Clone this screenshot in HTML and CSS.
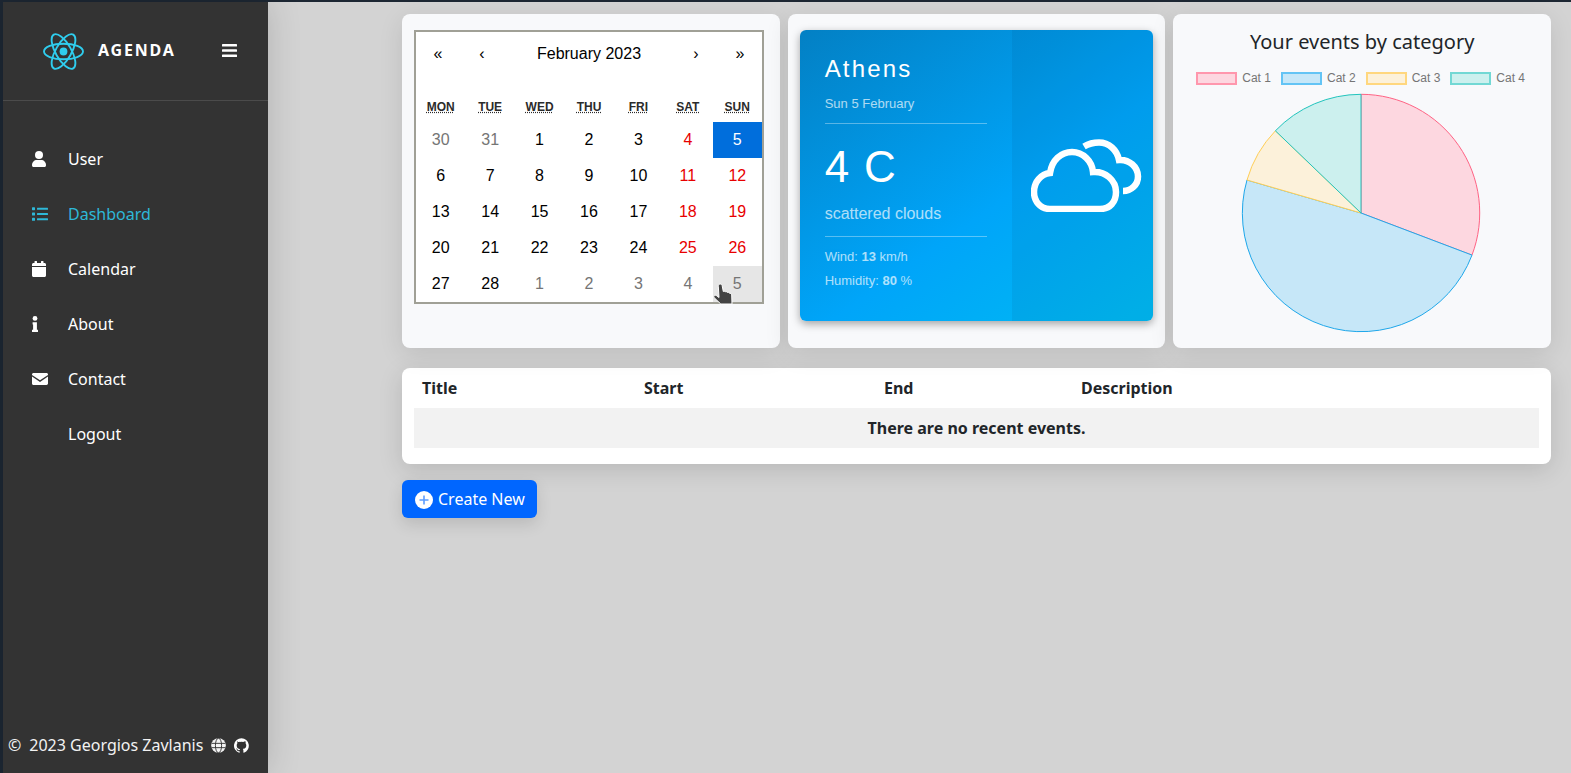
FILE: index.html
```html
<!DOCTYPE html>
<html>
<head>
    <meta charset="utf-8" />
    <title>Agenda</title>
    <link rel="stylesheet" href="styles.css">
</head>
<body>
<div class="page">
    <aside class="sidebar">
        <div class="brand">
            <svg class="brand_logo" viewBox="-20.500 -18.500 41 37" fill="none" stroke="#2fcdee" stroke-width="1.900">
                <circle r="3.900" fill="#2fcdee" stroke="none"/>
                <ellipse rx="19.500" ry="7.800"/>
                <ellipse rx="19.500" ry="7.800" transform="rotate(60)"/>
                <ellipse rx="19.500" ry="7.800" transform="rotate(120)"/>
            </svg>
            <span class="brand_name">AGENDA</span>
            <svg class="brand_toggle" viewBox="0 0 15 13" fill="#fff">
                <rect y="0" width="15" height="2.600" rx="0.600"/>
                <rect y="5.200" width="15" height="2.600" rx="0.600"/>
                <rect y="10.400" width="15" height="2.600" rx="0.600"/>
            </svg>
        </div>
        <ul class="nav">
            <li class="nav_item">
                <svg class="nav_icon" viewBox="0 0 16 16" fill="currentColor"><circle cx="7" cy="4" r="4"/><path d="M0 14.200C0 11 2.300 9 4.800 9h4.400C11.700 9 14 11 14 14.200 14 15.200 13.300 16 12.400 16H1.600C.7 16 0 15.200 0 14.200z"/></svg>
                User
            </li>
            <li class="nav_item nav_item_active">
                <svg class="nav_icon" viewBox="0 0 16 16" fill="currentColor"><rect x="0" y="1.200" width="3" height="3" rx=".6"/><rect x="0" y="6.500" width="3" height="3" rx=".6"/><rect x="0" y="11.800" width="3" height="3" rx=".6"/><rect x="5" y="1.700" width="11" height="2" rx=".5"/><rect x="5" y="7" width="11" height="2" rx=".5"/><rect x="5" y="12.300" width="11" height="2" rx=".5"/></svg>
                Dashboard
            </li>
            <li class="nav_item">
                <svg class="nav_icon" viewBox="0 0 16 16" fill="currentColor"><path d="M0 6h14v8.500c0 .8-.7 1.500-1.500 1.500h-11C.7 16 0 15.300 0 14.500z"/><path d="M3 0h1.500c.3 0 .5.200.5.500V2h4V.5c0-.3.200-.5.500-.5H11c.3 0 .5.200.5.500V2h1C13.300 2 14 2.700 14 3.500V5H0V3.500C0 2.700.7 2 1.500 2h1V.5C2.500.2 2.700 0 3 0z"/></svg>
                Calendar
            </li>
            <li class="nav_item">
                <svg class="nav_icon" viewBox="0 0 16 16" fill="currentColor"><circle cx="3" cy="2.400" r="2.400"/><path d="M.6 6.200h4.300v7.600h1.100V16H0v-2.200h1.100V8.400H.6z"/></svg>
                About
            </li>
            <li class="nav_item">
                <svg class="nav_icon" viewBox="0 0 16 16" fill="currentColor"><path d="M1.500 2h13c.8 0 1.500.7 1.500 1.500v.4L8 9.300 0 3.900v-.4C0 2.700.7 2 1.500 2z"/><path d="M0 5.600l8 5.300 8-5.300v7C16 13.300 15.300 14 14.500 14h-13C.7 14 0 13.300 0 12.500z"/></svg>
                Contact
            </li>
            <li class="nav_item">
                <span class="nav_icon"></span>
                Logout
            </li>
        </ul>
        <div class="credits">
            <span class="credits_copy">©</span>
            <span>2023 Georgios Zavlanis</span>
            <svg class="credits_icon" viewBox="0 0 16 16">
                <circle cx="8" cy="8" r="7.800" fill="#f4f4f4"/>
                <g fill="none" stroke="#333" stroke-width="1">
                    <ellipse cx="8" cy="8" rx="3.300" ry="7.800"/>
                    <path d="M.5 5.700h15M.5 10.300h15"/>
                </g>
            </svg>
            <svg class="credits_icon" viewBox="0 0 16 16" fill="#fff"><path d="M8 .2a8 8 0 0 0-2.500 15.600c.4.100.5-.2.500-.4v-1.400c-2.200.5-2.700-1-2.700-1-.4-.9-.9-1.200-.9-1.200-.7-.5.100-.5.100-.5.800.1 1.200.8 1.200.8.700 1.200 1.900.9 2.300.7.100-.5.300-.9.500-1.100-1.800-.2-3.600-.9-3.600-4 0-.9.300-1.600.8-2.100-.1-.2-.4-1 .1-2.100 0 0 .7-.2 2.200.8a7.600 7.600 0 0 1 4 0c1.500-1 2.200-.8 2.200-.8.400 1.100.2 1.900.1 2.100.5.600.8 1.300.8 2.100 0 3.100-1.900 3.700-3.700 3.900.3.300.6.700.6 1.500v2.200c0 .2.100.5.600.4A8 8 0 0 0 8 .2z"/></svg>
        </div>
    </aside>

    <main class="content">
        <section class="widgets">
            <div class="card">
                <div class="calendar">
                    <div class="calendar_nav">
                        <span class="calendar_arrow">«</span>
                        <span class="calendar_arrow">‹</span>
                        <span class="calendar_label">February 2023</span>
                        <span class="calendar_arrow">›</span>
                        <span class="calendar_arrow">»</span>
                    </div>
                    <div class="calendar_weekdays">
                        <abbr title="Monday">Mon</abbr>
                        <abbr title="Tuesday">Tue</abbr>
                        <abbr title="Wednesday">Wed</abbr>
                        <abbr title="Thursday">Thu</abbr>
                        <abbr title="Friday">Fri</abbr>
                        <abbr title="Saturday">Sat</abbr>
                        <abbr title="Sunday">Sun</abbr>
                    </div>
                    <div class="calendar_days">
                        <span class="tile tile_other">30</span><span class="tile tile_other">31</span><span class="tile">1</span><span class="tile">2</span><span class="tile">3</span><span class="tile tile_weekend">4</span><span class="tile tile_active">5</span>
                        <span class="tile">6</span><span class="tile">7</span><span class="tile">8</span><span class="tile">9</span><span class="tile">10</span><span class="tile tile_weekend">11</span><span class="tile tile_weekend">12</span>
                        <span class="tile">13</span><span class="tile">14</span><span class="tile">15</span><span class="tile">16</span><span class="tile">17</span><span class="tile tile_weekend">18</span><span class="tile tile_weekend">19</span>
                        <span class="tile">20</span><span class="tile">21</span><span class="tile">22</span><span class="tile">23</span><span class="tile">24</span><span class="tile tile_weekend">25</span><span class="tile tile_weekend">26</span>
                        <span class="tile">27</span><span class="tile">28</span><span class="tile tile_other">1</span><span class="tile tile_other">2</span><span class="tile tile_other">3</span><span class="tile tile_other">4</span>
                        <span class="tile tile_other tile_hover">5
                            <svg class="cursor" viewBox="0 0 20 22">
                                <path d="M7.300 1C8.400 1 9 1.800 9.200 2.800L10.300 8.600C11 8 12 8.200 12.400 8.900 13.100 8.400 14.100 8.700 14.400 9.500 15.100 9.100 16.100 9.400 16.400 10.200 17.500 10.200 18.500 10.900 18.700 12L19 21H7.800L1.800 15.300C.7 14.200 .6 13.200 1.300 12.600 2 12 3.100 12.200 4 13L6 14.500 5.300 3.200C5.200 2 6.100 1 7.300 1Z" fill="#444" stroke="#fff" stroke-width="1"/>
                            </svg>
                        </span>
                    </div>
                </div>
            </div>

            <div class="card">
                <div class="weather">
                    <div class="weather_info">
                        <h3 class="weather_city">Athens</h3>
                        <p class="weather_date">Sun 5 February</p>
                        <hr class="weather_line">
                        <p class="weather_temp">4 C</p>
                        <p class="weather_desc">scattered clouds</p>
                        <hr class="weather_line weather_line_low">
                        <p class="weather_stat">Wind: <strong>13</strong> km/h</p>
                        <p class="weather_stat">Humidity: <strong>80</strong> %</p>
                    </div>
                    <div class="weather_side">
                        <svg class="weather_icon" viewBox="0 0 111 73" fill="none" stroke="#fff" stroke-width="6.500">
                            <path d="M19 70C9 70 3 62 3 53 3 43 10 35 19 34 21 21 30 13 41 13 52 13 61 22 62 33 74 32 85 41 85 53 85 63 79 70 69 70Z"/>
                            <path d="M53 7.500C58 4.500 63 3.500 68 3.500 78 3.500 86 11 88 21 98 20 107 28 107 37.500 107 46 100 52 92 52"/>
                        </svg>
                    </div>
                </div>
            </div>

            <div class="card card_chart">
                <h2 class="chart_title">Your events by category</h2>
                <ul class="legend">
                    <li class="legend_item"><span class="legend_box legend_cat1"></span>Cat 1</li>
                    <li class="legend_item"><span class="legend_box legend_cat2"></span>Cat 2</li>
                    <li class="legend_item"><span class="legend_box legend_cat3"></span>Cat 3</li>
                    <li class="legend_item"><span class="legend_box legend_cat4"></span>Cat 4</li>
                </ul>
                <svg class="pie" viewBox="-120 -120 240 240" stroke-width="1">
                    <path d="M0 0V-118.700A118.700 118.700 0 0 1 111 42.100Z" fill="#fdd7e0" stroke="#ff6384"/>
                    <path d="M0 0L111 42.100A118.700 118.700 0 0 1 -114 -33Z" fill="#c6e7f8" stroke="#1ea7ea"/>
                    <path d="M0 0L-114 -33A118.700 118.700 0 0 1 -85.600 -82.200Z" fill="#fcf1da" stroke="#ffce56"/>
                    <path d="M0 0L-85.600 -82.200A118.700 118.700 0 0 1 0 -118.700Z" fill="#ccf0ee" stroke="#22c4bd"/>
                </svg>
            </div>
        </section>

        <section class="events">
            <table class="events_table">
                <thead>
                    <tr>
                        <th class="col_title">Title</th>
                        <th class="col_start">Start</th>
                        <th class="col_end">End</th>
                        <th>Description</th>
                    </tr>
                </thead>
                <tbody>
                    <tr>
                        <td class="events_empty" colspan="4">There are no recent events.</td>
                    </tr>
                </tbody>
            </table>
        </section>

        <a class="btn_create">
            <svg class="btn_plus" viewBox="0 0 18 18"><circle cx="9" cy="9" r="9" fill="#fff"/><path d="M9 4.500v9M4.500 9h9" stroke="#5c9dff" stroke-width="1.600"/></svg>
            Create New
        </a>
    </main>
</div>
</body>
</html>
```

FILE: styles.css
```css
html, body {
    height: 100%;
    margin: 0;
}

body {
    background: #1d2733;
    color: #212529;
    font-family: "Noto Sans", sans-serif;
    overflow: hidden;
}

.page {
    display: flex;
    height: 100%;
    box-sizing: border-box;
    padding: 2px 0 0 3px;
}

/* sidebar */
.sidebar {
    display: flex;
    flex-direction: column;
    flex: 0 0 265px;
    background: #333;
    color: #fff;
    box-shadow: 0 0 32px rgba(0, 0, 0, 0.16);
    position: relative;
    z-index: 1;
}

.brand {
    display: flex;
    align-items: center;
    height: 98px;
    padding-left: 40px;
    border-bottom: 1px solid #4b4b4b;
}

.brand_logo {
    width: 41px;
    height: 37px;
}

.brand_name {
    margin: 0 0 2px 14px;
    font-size: 16px;
    font-weight: 700;
    letter-spacing: 1.800px;
}

.brand_toggle {
    width: 15px;
    height: 13px;
    margin: 0 0 2px 46px;
}

.nav {
    list-style: none;
    margin: 0;
    padding: 30px 0 0;
}

.nav_item {
    display: flex;
    align-items: center;
    height: 55px;
    padding-left: 29px;
    font-size: 16px;
}

.nav_item_active {
    color: #2eb8d8;
}

.nav_icon {
    flex: 0 0 16px;
    width: 16px;
    height: 16px;
    margin-right: 20px;
}

.credits {
    display: flex;
    align-items: center;
    margin-top: auto;
    height: 50px;
    padding: 0 0 3px 5px;
    font-size: 16px;
    color: #f2f2f2;
}

.credits_copy {
    margin-right: 8px;
}

.credits_icon {
    width: 15px;
    height: 15px;
    margin-left: 8px;
}

/* main area */
.content {
    flex: 1;
    min-width: 0;
    background: #d3d3d3;
    padding: 12px 20px 0 134px;
}

.widgets {
    display: grid;
    grid-template-columns: repeat(3, 1fr);
    gap: 8px;
    height: 334px;
}

.card {
    background: #f8f9fb;
    border-radius: 8px;
    padding: 16px 12px;
    box-shadow: 0 6px 24px rgba(0, 0, 0, 0.1);
    min-width: 0;
}

/* calendar */
.calendar {
    width: 350px;
    box-sizing: border-box;
    background: #fff;
    border: 2px solid #a0a096;
    font-family: "Liberation Sans", Arial, sans-serif;
    color: #000;
}

.calendar_nav {
    display: flex;
    height: 44px;
    margin-bottom: 16px;
    align-items: center;
    font-size: 16px;
}

.calendar_arrow {
    flex: 0 0 44px;
    text-align: center;
}

.calendar_label {
    flex: 1;
    text-align: center;
}

.calendar_weekdays {
    display: grid;
    grid-template-columns: repeat(7, 1fr);
    height: 30px;
    align-items: center;
    color: #2b2b2b;
    font-size: 12px;
    font-weight: 700;
    text-align: center;
    text-transform: uppercase;
}

.calendar_days {
    display: grid;
    grid-template-columns: repeat(7, 1fr);
    grid-auto-rows: 36px;
    font-size: 16px;
    text-align: center;
    line-height: 36px;
}

.tile {
    position: relative;
}

.tile_other {
    color: #757575;
}

.tile_weekend {
    color: #e80000;
}

.tile_active {
    background: #006edc;
    color: #fff;
}

.tile_hover {
    background: #e6e6e6;
}

.cursor {
    position: absolute;
    left: 0;
    top: 17px;
    width: 20px;
    height: 22px;
}

/* weather */
.weather {
    display: flex;
    height: 291px;
    border-radius: 6px;
    overflow: hidden;
    color: #fff;
    font-family: "Liberation Sans", Arial, sans-serif;
    background: linear-gradient(145deg, #0380c4 0%, #00a5f9 58%, #00baf2 100%);
    box-shadow: 0 3px 8px rgba(0, 0, 0, 0.35);
}

.weather_info {
    flex: 0 0 212px;
    box-sizing: border-box;
    padding: 24px 25px 0;
}

.weather_side {
    flex: 1;
    background: rgba(0, 40, 90, 0.07);
    padding: 109px 0 0 19px;
}

.weather_icon {
    display: block;
    width: 111px;
    height: 73px;
}

.weather_city {
    margin: 0;
    font-size: 24px;
    font-weight: 400;
    line-height: 29px;
    letter-spacing: 2.200px;
}

.weather_date {
    margin: 13px 0 0;
    font-size: 13px;
    line-height: 15px;
    opacity: 0.68;
}

.weather_line {
    margin: 12px 0 0;
    border: 0;
    border-top: 1px solid rgba(255, 255, 255, 0.35);
}

.weather_temp {
    margin: 17px 0 0;
    font-size: 44px;
    line-height: 52px;
    letter-spacing: 1.300px;
}

.weather_desc {
    margin: 12px 0 0;
    font-size: 16px;
    line-height: 18px;
    opacity: 0.68;
}

.weather_line_low {
    margin-top: 13px;
}

.weather_stat {
    margin: 9px 0 0;
    font-size: 13px;
    line-height: 15px;
    opacity: 0.68;
}

.weather_line_low + .weather_stat {
    margin-top: 12px;
}

/* chart */
.card_chart {
    display: flex;
    flex-direction: column;
    align-items: center;
    padding: 14px 0 0;
}

.chart_title {
    margin: 0;
    font-size: 20px;
    font-weight: 400;
    line-height: 28px;
}

.legend {
    display: flex;
    list-style: none;
    margin: 15px 0 0;
    padding: 0 3px 0 0;
    gap: 10px;
    font-family: "Liberation Sans", Arial, sans-serif;
    font-size: 12px;
    color: #757575;
    line-height: 14px;
}

.legend_item {
    display: flex;
    align-items: center;
    gap: 5px;
}

.legend_box {
    width: 41px;
    height: 13px;
    box-sizing: border-box;
    border: 2px solid;
}

.legend_cat1 {
    background: #fdd7e0;
    border-color: #ff97ad;
}

.legend_cat2 {
    background: #c6e7f8;
    border-color: #63c4f5;
}

.legend_cat3 {
    background: #fcf1da;
    border-color: #ffd77e;
}

.legend_cat4 {
    background: #ccf0ee;
    border-color: #72d8d4;
}

.pie {
    display: block;
    width: 240px;
    height: 240px;
    margin: 8px 2px 0 0;
}

/* events table */
.events {
    margin-top: 20px;
    background: #fff;
    border-radius: 8px;
    padding: 0 12px 16px;
    box-shadow: 0 6px 24px rgba(0, 0, 0, 0.13);
}

.events_table {
    width: 100%;
    border-collapse: collapse;
    table-layout: fixed;
    font-size: 16px;
}

.events_table th {
    height: 40px;
    padding: 0 8px;
    font-weight: 700;
    text-align: left;
}

.col_title {
    width: 206px;
}

.col_start {
    width: 224px;
}

.col_end {
    width: 181px;
}

.events_empty {
    height: 40px;
    padding: 0 8px;
    background: #f2f2f2;
    font-weight: 700;
    text-align: center;
}

.btn_create {
    display: inline-flex;
    align-items: center;
    gap: 5px;
    height: 38px;
    margin-top: 16px;
    padding: 0 12px 0 13px;
    background: #0066ff;
    border-radius: 6px;
    color: #fff;
    font-size: 16px;
    box-shadow: 0 6px 16px rgba(0, 0, 0, 0.12);
}

.btn_plus {
    width: 18px;
    height: 18px;
    margin-top: 2px;
}
```
